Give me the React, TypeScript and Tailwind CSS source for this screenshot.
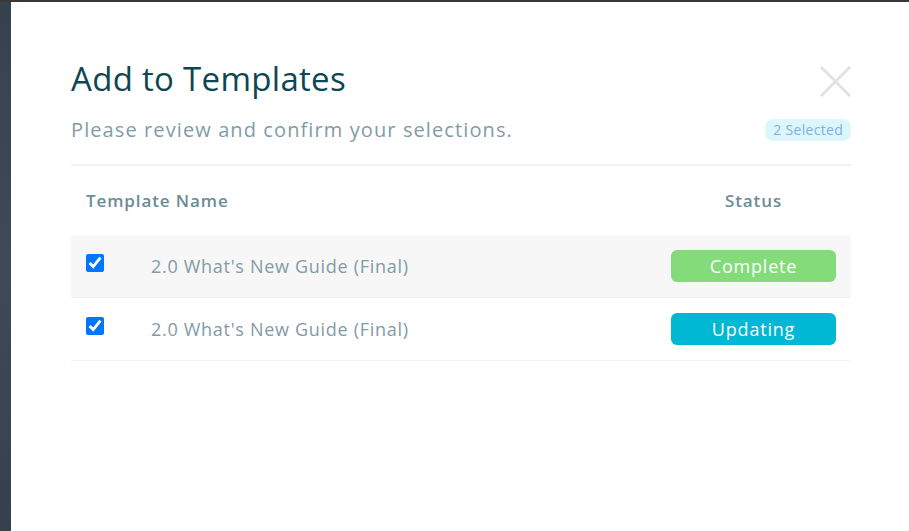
const rows = [
  { id: 1, name: "2.0 What's New Guide (Final)", status: "Complete" },
  { id: 2, name: "2.0 What's New Guide (Final)", status: "Updating" },
];

export default function App() {
  return (
    <div
      className="flex flex-col h-[531px] w-[909px] overflow-hidden bg-white"
      style={{ fontFamily: "'Open Sans', Lato, sans-serif" }}
    >
      <div className="h-[2px] bg-[#383838]" />
      <div className="flex flex-1">
        <div className="w-[11px] bg-gradient-to-b from-[#37424c] via-[#3f4a55] to-[#36414b]" />
        <div className="flex-1 bg-white pl-[60px] pr-[58px] pt-[55px]">
          <div className="flex items-start justify-between">
            <h1 className="text-[33px] leading-[44px] tracking-[0.3px] text-[#0e4654]">Add to Templates</h1>
            <button className="mt-[9px] w-[31px] h-[31px] text-[#e2e2e2]">
              <svg viewBox="0 0 31 31" className="w-full h-full" fill="none" stroke="currentColor" strokeWidth="3">
                <path d="M1 1 L30 30 M30 1 L1 30" />
              </svg>
            </button>
          </div>
          <div className="flex items-center justify-between mt-[17px] pb-[22px] border-b-2 border-[#f2f2f2]">
            <p className="text-[20px] leading-[24px] tracking-[1.1px] text-[#819ca7]">
              Please review and confirm your selections.
            </p>
            <span className="rounded-lg bg-[#dcf6fc] px-[8px] py-[3px] text-[14px] leading-[16px] tracking-[0.3px] text-[#7cb1e2]">
              2 Selected
            </span>
          </div>
          <div className="flex items-center h-[69px] text-[17px] font-semibold tracking-[0.9px] text-[#6b8c96]">
            <div className="flex-1 pl-[15px]">Template Name</div>
            <div className="w-[165px] mr-[15px] text-center">Status</div>
          </div>
          {rows.map((row, i) => (
            <div
              key={row.id}
              className={`flex items-center h-[63px] border-b border-[#f3f3f3] ${i === 0 ? "bg-[#f7f7f7]" : "bg-white"}`}
            >
              <div className="w-[80px] pl-[15px] self-start pt-[19px]">
                <input
                  type="checkbox"
                  defaultChecked
                  className="block w-[18px] h-[18px] accent-[#0075ff]"
                />
              </div>
              <div className="flex-1 text-[18px] tracking-[0.7px] text-[#819ca7]">{row.name}</div>
              <div
                className={`w-[165px] mr-[15px] h-[32px] rounded-md flex items-center justify-center text-[18px] tracking-[0.8px] text-white ${
                  row.status === "Complete" ? "bg-[#84db7a]" : "bg-[#00b8d4]"
                }`}
              >
                {row.status}
              </div>
            </div>
          ))}
        </div>
      </div>
    </div>
  );
}
